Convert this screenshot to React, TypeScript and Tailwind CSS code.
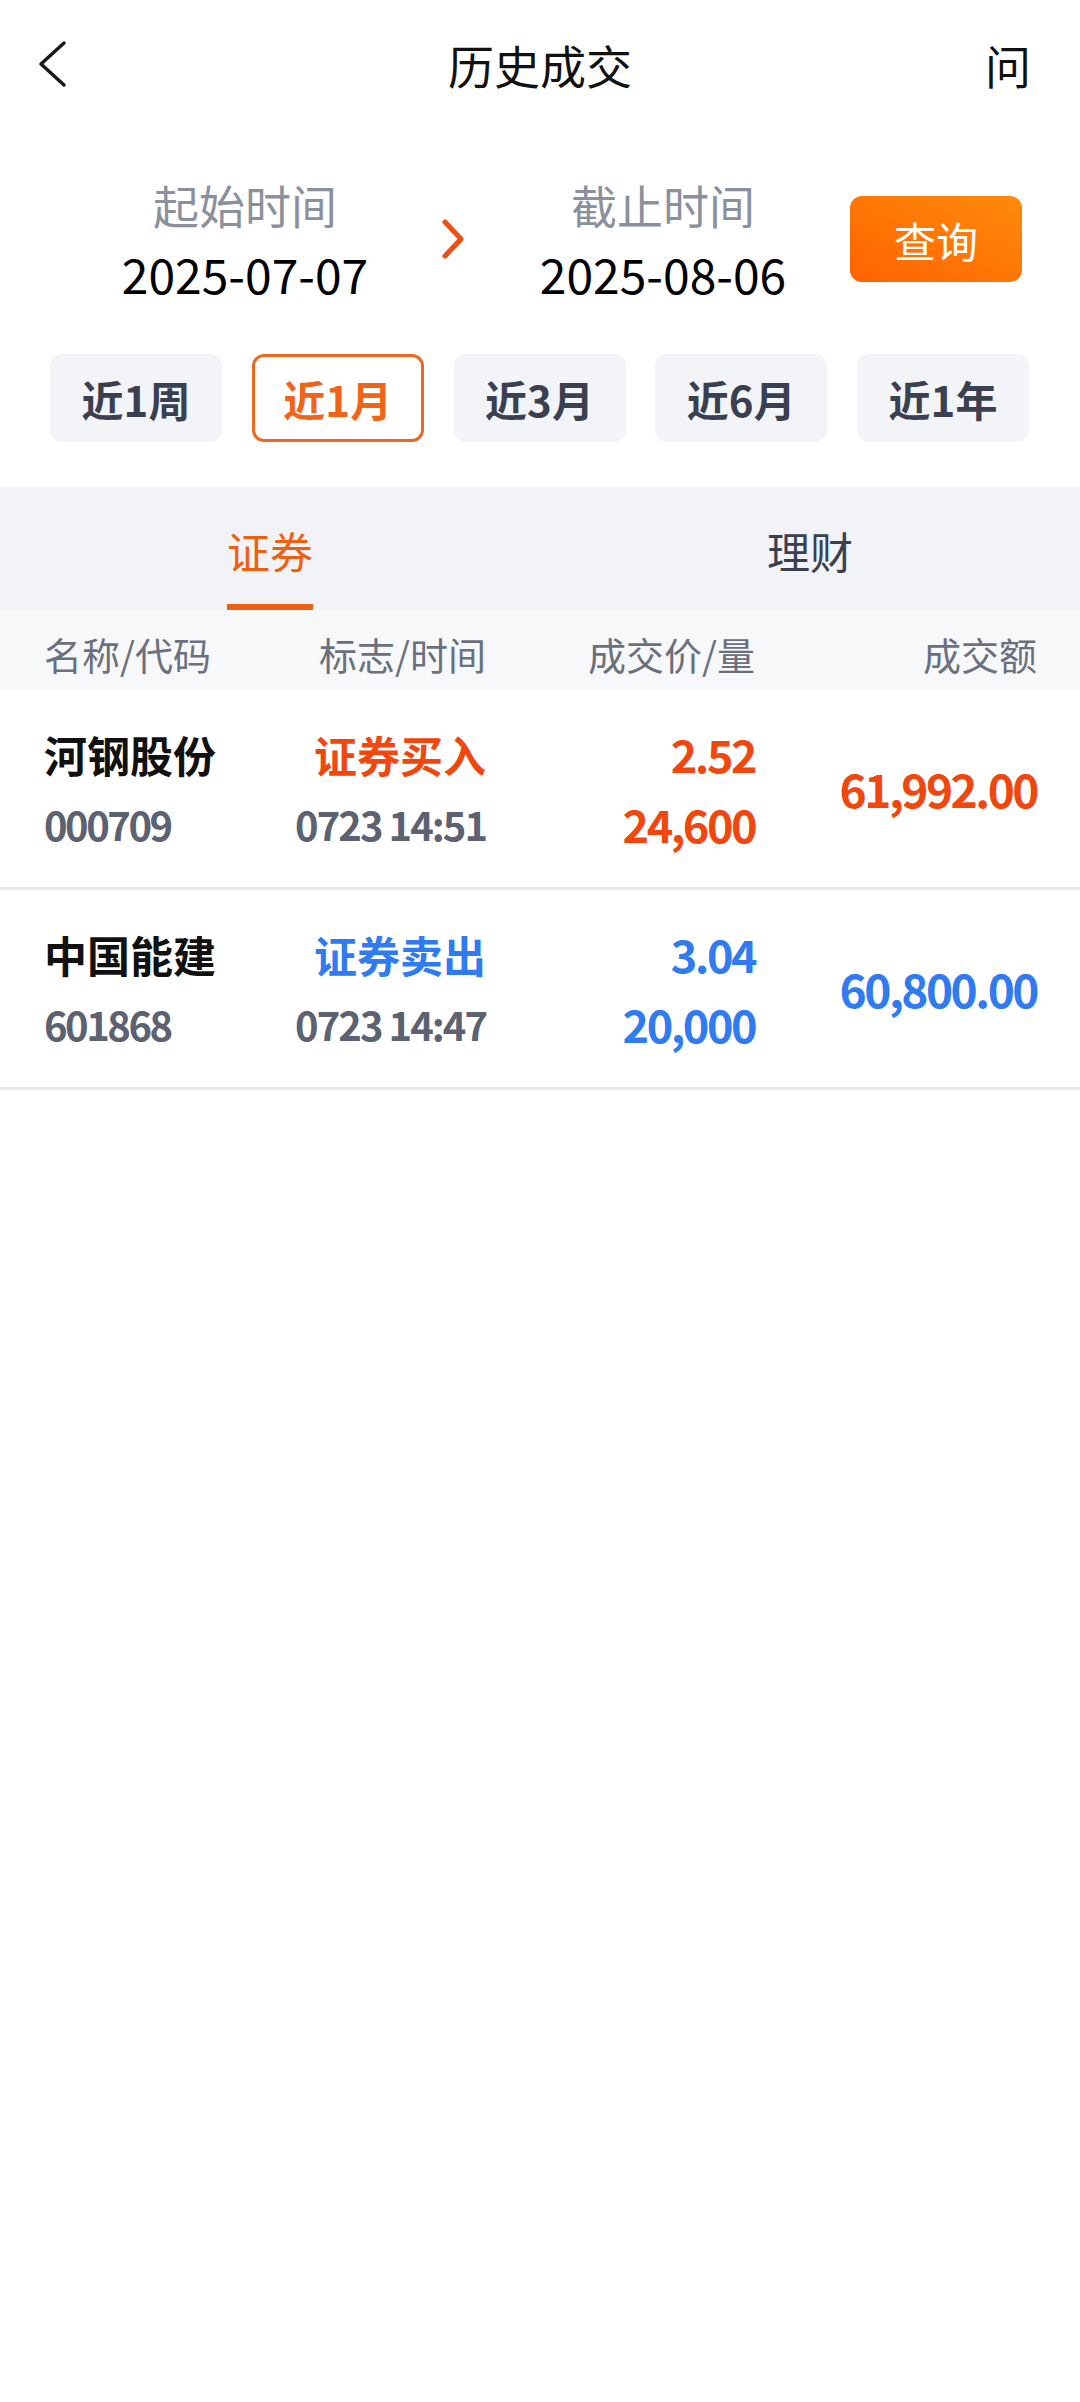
import { useState } from 'react';

// 历史成交 page

const trades = [
  {
    name: '河钢股份',
    code: '000709',
    side: '证券买入',
    time: '0723 14:51',
    price: '2.52',
    qty: '24,600',
    amount: '61,992.00',
    buy: true,
  },
  {
    name: '中国能建',
    code: '601868',
    side: '证券卖出',
    time: '0723 14:47',
    price: '3.04',
    qty: '20,000',
    amount: '60,800.00',
    buy: false,
  },
];

const ranges = ['近1周', '近1月', '近3月', '近6月', '近1年'];

export default function App() {
  const [range, setRange] = useState('近1月');
  const [tab, setTab] = useState('证券');

  return (
    <div className="min-h-screen w-full bg-white font-['Noto_Sans_CJK_SC',sans-serif] text-[#111]">
      {/* header */}
      <div className="grid h-[128px] grid-cols-[1fr_auto_1fr] items-center">
        <div className="pl-[36px]">
          <svg width="32" height="48" viewBox="0 0 32 48" fill="none">
            <polyline points="28,3 5,24 28,45" stroke="#1a1a1a" strokeWidth="3.5" strokeLinecap="round" strokeLinejoin="round" />
          </svg>
        </div>
        <div className="text-[46px] leading-none">历史成交</div>
        <div className="pr-[49px] text-right text-[46px] leading-none">问</div>
      </div>

      {/* date range */}
      <div className="flex items-start pl-[100px] pt-[47px]">
        <div className="flex w-[290px] flex-col items-center">
          <div className="text-[46px] leading-[58px] text-[#8b909d]">起始时间</div>
          <div className="text-[48px] leading-[80px] text-black">2025-07-07</div>
        </div>
        <div className="ml-[51px] mt-[43px] w-[23px]">
          <svg width="24" height="42" viewBox="0 0 24 42" fill="none">
            <polyline points="4,4 20,21 4,38" stroke="#f04e10" strokeWidth="5" strokeLinecap="round" strokeLinejoin="round" />
          </svg>
        </div>
        <div className="ml-[54px] flex w-[290px] flex-col items-center">
          <div className="text-[46px] leading-[58px] text-[#8b909d]">截止时间</div>
          <div className="text-[48px] leading-[80px] text-black">2025-08-06</div>
        </div>
        <button className="ml-[42px] mt-[21px] flex h-[86px] w-[172px] items-center justify-center rounded-[12px] bg-gradient-to-tr from-[#ff6200] to-[#ff8a0c] text-[42px] text-white">
          查询
        </button>
      </div>

      {/* quick ranges */}
      <div className="mt-[41px] flex justify-between pl-[50px] pr-[51px]">
        {ranges.map((r) => (
          <button
            key={r}
            onClick={() => setRange(r)}
            className={
              r === range
                ? 'flex h-[88px] w-[172px] items-center justify-center rounded-[12px] border-[3px] border-[#eb6a22] bg-white text-[42px] font-bold text-[#ef6418]'
                : 'flex h-[88px] w-[172px] items-center justify-center rounded-[12px] bg-[#f3f4f8] text-[42px] font-bold text-[#3a4050]'
            }
          >
            {r}
          </button>
        ))}
      </div>

      {/* tabs */}
      <div className="mt-[45px] flex h-[123px] bg-[#f2f3f7]">
        {['证券', '理财'].map((t) => (
          <button key={t} onClick={() => setTab(t)} className="flex w-1/2 flex-col items-center pt-[33px]">
            <span className={t === tab ? 'text-[43px] leading-[60px] text-[#ee5f10]' : 'text-[43px] leading-[60px] text-[#3a4050]'}>{t}</span>
            <span className={t === tab ? 'mt-[24px] h-[6px] w-[86px] bg-[#ee5f10]' : 'mt-[24px] h-[6px] w-[86px]'} />
          </button>
        ))}
      </div>

      {/* table head */}
      <div className="flex h-[80px] items-center bg-[#f7f8fa] pl-[44px] pt-[6px] text-[38px] text-[#6b707e]">
        <div className="w-[200px]">名称/代码</div>
        <div className="w-[242px] text-right">标志/时间</div>
        <div className="w-[269px] text-right">成交价/量</div>
        <div className="w-[282px] text-right">成交额</div>
      </div>

      {/* rows */}
      {trades.map((t) => {
        const color = t.buy ? 'text-[#f0470e]' : 'text-[#2f7bef]';
        return (
          <div key={t.code} className="flex h-[200px] items-center border-b-[3px] border-[#e6e7eb] pl-[44px] font-bold">
            <div className="w-[200px]">
              <div className="text-[43px] leading-[70px] text-[#111]">{t.name}</div>
              <div className="text-[40px] leading-[70px] tracking-[-2.5px] text-[#5c6272]">{t.code}</div>
            </div>
            <div className="w-[242px] text-right">
              <div className={`text-[43px] leading-[70px] ${color}`}>{t.side}</div>
              <div className="text-[40px] leading-[70px] tracking-[-2px] text-[#5c6272]">{t.time}</div>
            </div>
            <div className={`w-[269px] text-right tracking-[-2.5px] ${color}`}>
              <div className="text-[45px] leading-[70px]">{t.price}</div>
              <div className="text-[45px] leading-[70px]">{t.qty}</div>
            </div>
            <div className={`w-[282px] text-right text-[46px] tracking-[-2.5px] ${color}`}>{t.amount}</div>
          </div>
        );
      })}
    </div>
  );
}
